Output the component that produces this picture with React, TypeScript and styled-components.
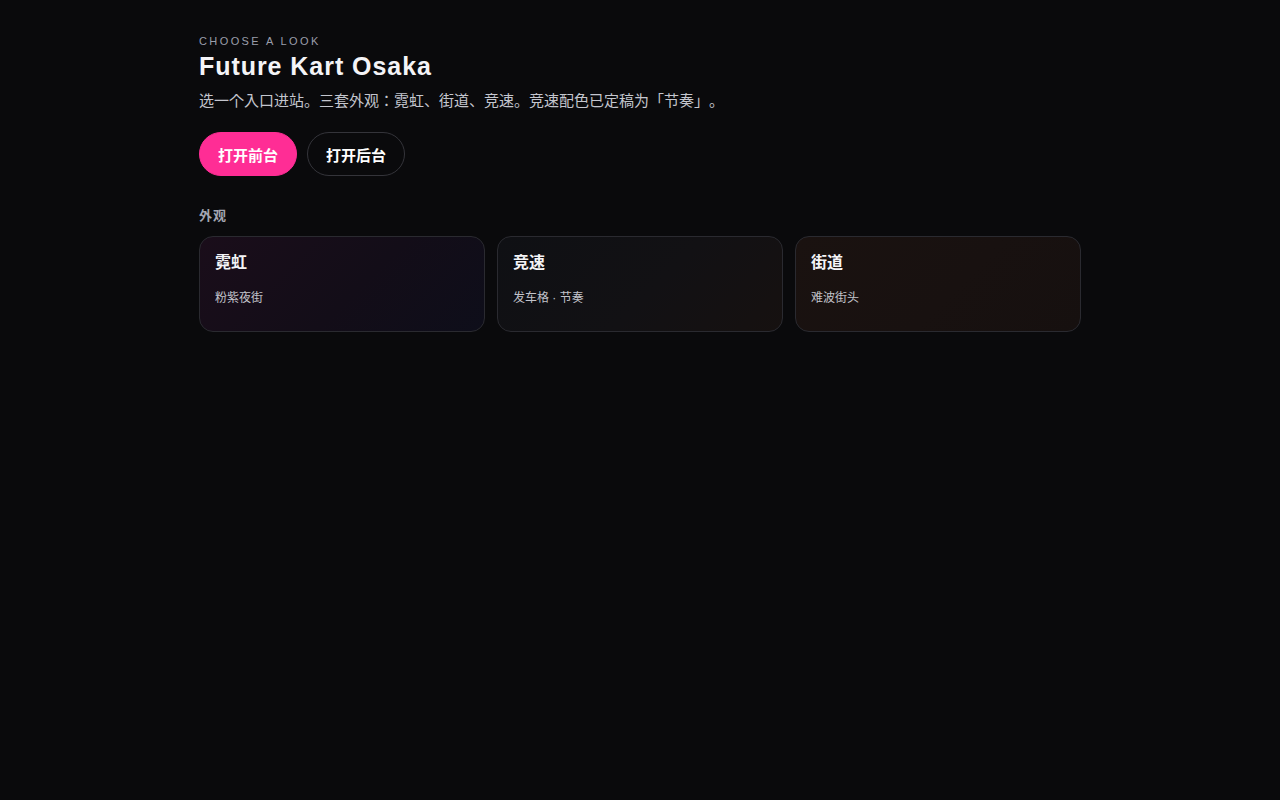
import styled, { createGlobalStyle } from 'styled-components';

type Look = { title: string; sub: string; bg: string };

const looks: Look[] = [
  {
    title: '霓虹',
    sub: '粉紫夜街',
    bg: 'linear-gradient(135deg, #1a0d1a 0%, #130d18 55%, #0e0e1a 100%)',
  },
  {
    title: '竞速',
    sub: '发车格 · 节奏',
    bg: 'linear-gradient(135deg, #0f1014 0%, #121114 55%, #161110 100%)',
  },
  {
    title: '街道',
    sub: '难波街头',
    bg: 'linear-gradient(135deg, #1a1210 0%, #181110 55%, #16100f 100%)',
  },
];

const GlobalStyle = createGlobalStyle`
  html, body {
    margin: 0;
    background: #0a0a0c;
    color: #f2f2f5;
    font-family: "Liberation Sans", "Noto Sans CJK JP", sans-serif;
    text-spacing-trim: space-all;
  }
`;

export default function App() {
  return (
    <>
      <GlobalStyle />
      <Page>
        <Eyebrow>CHOOSE A LOOK</Eyebrow>
        <Title>Future Kart Osaka</Title>
        <Lead>选一个入口进站。三套外观：霓虹、街道、竞速。竞速配色已定稿为「节奏」。</Lead>
        <Actions>
          <Button $primary>打开前台</Button>
          <Button>打开后台</Button>
        </Actions>
        <SectionLabel>外观</SectionLabel>
        <CardGrid>
          {looks.map((look) => (
            <Card key={look.title} $bg={look.bg}>
              <CardTitle>{look.title}</CardTitle>
              <CardSub>{look.sub}</CardSub>
            </Card>
          ))}
        </CardGrid>
      </Page>
    </>
  );
}

const Page = styled.main`
  max-width: 882px;
  margin: 0 auto;
  padding-top: 34px;
  min-height: 800px;
  box-sizing: border-box;
`;

const Eyebrow = styled.div`
  font-size: 11px;
  letter-spacing: 2.4px;
  color: #9a9eab;
  line-height: 14px;
`;

const Title = styled.h1`
  margin: 2px 0 0;
  font-size: 25px;
  font-weight: 700;
  letter-spacing: 0.95px;
  line-height: 32px;
  color: #f4f4f7;
`;

const Lead = styled.p`
  margin: 8px 0 0;
  font-size: 15px;
  line-height: 22px;
  color: #c4c6ce;
`;

const Actions = styled.div`
  display: flex;
  gap: 10px;
  margin-top: 20px;
`;

const Button = styled.button<{ $primary?: boolean }>`
  height: 44px;
  padding: 0 18px;
  border-radius: 22px;
  font-family: inherit;
  font-size: 15px;
  font-weight: 700;
  color: #ffffff;
  cursor: pointer;
  background: ${(p) => (p.$primary ? '#ff2d95' : 'transparent')};
  border: 1px solid ${(p) => (p.$primary ? '#ff2d95' : '#34343a')};
`;

const SectionLabel = styled.div`
  margin-top: 32px;
  font-size: 13px;
  font-weight: 700;
  letter-spacing: 1px;
  color: #a3a6b2;
  line-height: 16px;
`;

const CardGrid = styled.div`
  display: grid;
  grid-template-columns: repeat(3, 1fr);
  gap: 12px;
  margin-top: 12px;
`;

const Card = styled.div<{ $bg: string }>`
  height: 96px;
  box-sizing: border-box;
  padding: 15px 15px;
  border-radius: 14px;
  border: 1px solid #2a2a30;
  background: ${(p) => p.$bg};
`;

const CardTitle = styled.div`
  font-size: 16px;
  font-weight: 700;
  line-height: 22px;
  color: #f4f4f7;
`;

const CardSub = styled.div`
  margin-top: 16px;
  font-size: 12px;
  line-height: 16px;
  color: #c2c3ca;
`;
